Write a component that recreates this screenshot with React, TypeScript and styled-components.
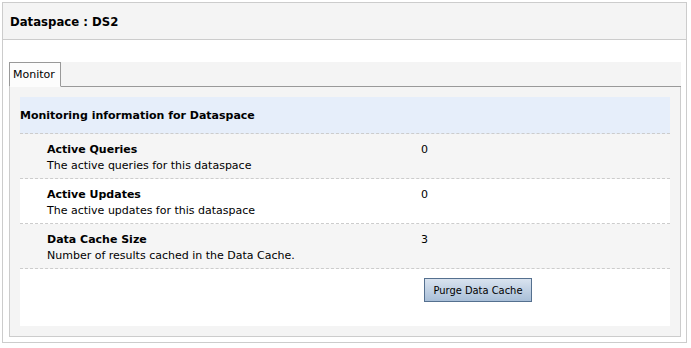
import React from 'react'
import styled, { createGlobalStyle } from 'styled-components'

const GlobalStyle = createGlobalStyle`
  body {
    margin: 0;
    background: #fff;
    font-family: "DejaVu Sans", Tahoma, sans-serif;
    font-size: 11px;
    color: #000;
  }
`

const Frame = styled.div`
  margin: 2px;
  width: 683px;
  height: 339px;
  border: 1px solid #cccccc;
  display: flex;
  flex-direction: column;
`

const Header = styled.div`
  height: 36px;
  background: #f4f4f4;
  border-bottom: 1px solid #cccccc;
  display: flex;
  align-items: center;
  padding-left: 7px;
  font-family: "DejaVu Sans Condensed", "DejaVu Sans", sans-serif;
  font-size: 13px;
  font-weight: bold;
`

const Body = styled.div`
  flex: 1;
  padding: 22px 5px 5px 6px;
  display: flex;
  flex-direction: column;
`

const TabBar = styled.div`
  height: 24px;
  background: #f4f4f4;
  border-bottom: 1px solid #999999;
  display: flex;
  align-items: flex-end;
`

const Tab = styled.div`
  height: 25px;
  margin-bottom: -1px;
  padding: 0 5px 0 3px;
  background: #fcfcfc;
  border: 1px solid #999999;
  border-bottom: 1px solid #fcfcfc;
  display: flex;
  align-items: center;
  box-sizing: border-box;
`

const Panel = styled.div`
  flex: 1;
  background: #f4f4f4;
  border: 1px solid #cccccc;
  border-top: none;
  padding: 10px;
  display: flex;
  flex-direction: column;
`

const Content = styled.div`
  flex: 1;
  background: #fff;
  display: flex;
  flex-direction: column;
`

const SectionTitle = styled.div`
  height: 36px;
  background: #e6eefa;
  border-bottom: 1px dashed #cccccc;
  display: flex;
  align-items: center;
  font-weight: bold;
`

const Row = styled.div<{ $shaded?: boolean; $last?: boolean }>`
  display: grid;
  grid-template-columns: 401px 1fr;
  height: ${({ $last }) => ($last ? 'auto' : '44px')};
  flex: ${({ $last }) => ($last ? 1 : 'none')};
  background: ${({ $shaded }) => ($shaded ? '#f5f5f5' : '#fff')};
  border-bottom: ${({ $last }) => ($last ? 'none' : '1px dashed #cccccc')};
  line-height: 16px;
`

const Label = styled.div`
  padding: 8px 0 0 27px;
`

const Name = styled.div`
  font-weight: bold;
`

const Value = styled.div`
  padding-top: 8px;
`

const ButtonCell = styled.div`
  padding: 9px 0 0 3px;
`

const Button = styled.button`
  width: 108px;
  height: 24px;
  border: 1px solid #55708f;
  background: linear-gradient(#d9e3ef, #a9bfd8);
  font-family: "DejaVu Sans Condensed", "DejaVu Sans", sans-serif;
  font-size: 11px;
  color: #000;
  padding: 0;
`

const rows = [
  { name: 'Active Queries', desc: 'The active queries for this dataspace', value: '0' },
  { name: 'Active Updates', desc: 'The active updates for this dataspace', value: '0' },
  { name: 'Data Cache Size', desc: 'Number of results cached in the Data Cache.', value: '3' },
]

export default function App() {
  return (
    <>
      <GlobalStyle />
      <Frame>
        <Header>Dataspace : DS2</Header>
        <Body>
          <TabBar>
            <Tab>Monitor</Tab>
          </TabBar>
          <Panel>
            <Content>
              <SectionTitle>Monitoring information for Dataspace</SectionTitle>
              {rows.map((r, i) => (
                <Row key={r.name} $shaded={i % 2 === 0}>
                  <Label>
                    <Name>{r.name}</Name>
                    <div>{r.desc}</div>
                  </Label>
                  <Value>{r.value}</Value>
                </Row>
              ))}
              <Row $last>
                <div />
                <ButtonCell>
                  <Button>Purge Data Cache</Button>
                </ButtonCell>
              </Row>
            </Content>
          </Panel>
        </Body>
      </Frame>
    </>
  )
}
